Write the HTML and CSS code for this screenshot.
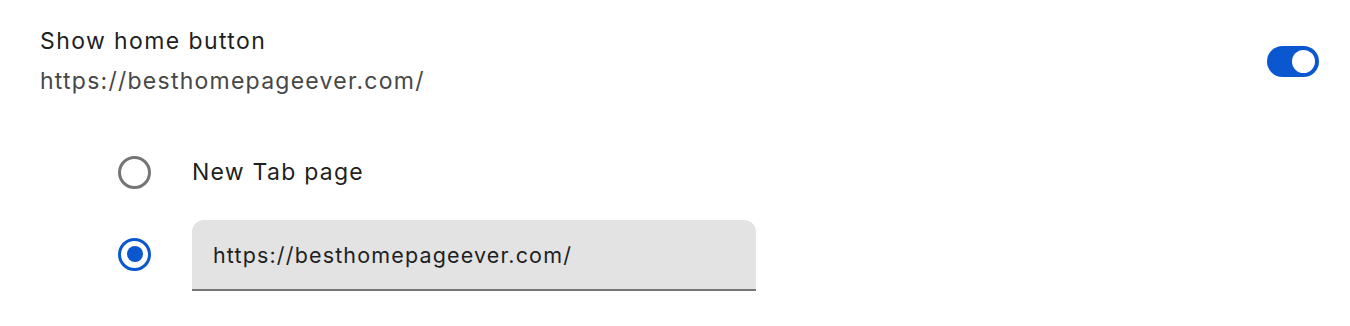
FILE: index.html
```html
<!DOCTYPE html>
<html>
<head>
<meta charset="utf-8">
<link rel="stylesheet" href="styles.css">
</head>
<body>
<div class="page">
  <div class="setting">
    <div class="labels">
      <div class="title">Show home button</div>
      <div class="sub">https://besthomepageever.com/</div>
    </div>
    <div class="toggle"><div class="knob"></div></div>
  </div>
  <div class="options">
    <div class="option first">
      <span class="radio"></span>
      <span class="opt-label">New Tab page</span>
    </div>
    <div class="option second">
      <span class="radio checked"></span>
      <div class="input">https://besthomepageever.com/</div>
    </div>
  </div>
</div>
</body>
</html>
```
FILE: styles.css
```css
html, body {
  margin: 0;
  background: #ffffff;
}
.page {
  font-family: Inter, Roboto, "Liberation Sans", sans-serif;
  font-size: 23px;
  letter-spacing: 1.25px;
  padding: 26px 31px 0 40px;
  color: #1f1f1f;
}
.setting {
  display: flex;
  justify-content: space-between;
  align-items: center;
}
.title {
  line-height: 30px;
  color: #1f1f1f;
  letter-spacing: 1.4px;
}
.sub {
  line-height: 30px;
  color: #474747;
  margin-top: 10px;
}
.toggle {
  width: 52px;
  height: 31px;
  border-radius: 16px;
  background: #0b57d0;
  position: relative;
}
.knob {
  position: absolute;
  right: 4px;
  top: 4px;
  width: 23px;
  height: 23px;
  border-radius: 50%;
  background: #ffffff;
}
.options {
  padding-left: 78px;
  margin-top: 59px;
}
.option {
  display: flex;
  align-items: center;
  gap: 41px;
}
.option.first {
  height: 34px;
}
.option.second {
  margin-top: 31px;
}
.radio {
  box-sizing: border-box;
  width: 33px;
  height: 33px;
  border-radius: 50%;
  border: 3px solid #757575;
  flex: none;
  display: flex;
  align-items: center;
  justify-content: center;
}
.radio.checked {
  border-color: #0b57d0;
  margin-top: -3px;
}
.radio.checked::after {
  content: "";
  width: 16px;
  height: 16px;
  border-radius: 50%;
  background: #0b57d0;
}
.opt-label {
  color: #1f1f1f;
}
.input {
  box-sizing: border-box;
  width: 564px;
  height: 71px;
  background: #e3e3e3;
  border-radius: 12px 12px 0 0;
  border-bottom: 2px solid #747775;
  padding: 0 21px;
  display: flex;
  align-items: center;
  font-size: 21.5px;
  letter-spacing: 1.15px;
  color: #1f1f1f;
}
```
